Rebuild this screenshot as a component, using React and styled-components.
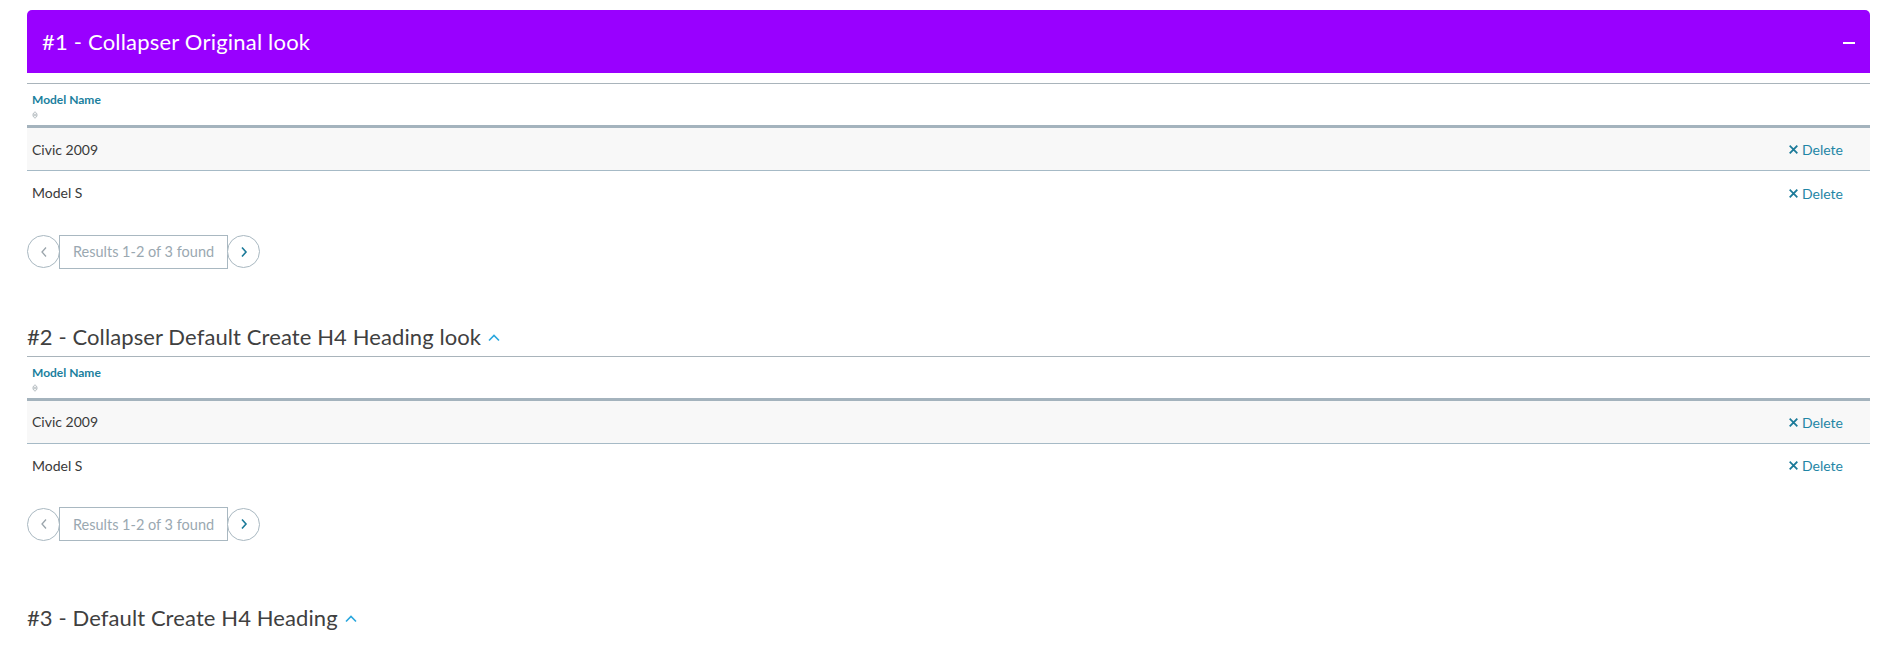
import React from "react"
import styled, { createGlobalStyle } from "styled-components"

const GlobalStyle = createGlobalStyle`
  body {
    margin: 0;
    background: #fff;
    font-family: Lato, "Open Sans", "Liberation Sans", sans-serif;
    color: #333;
  }
`

const rows = [
  { id: 1, name: "Civic 2009" },
  { id: 2, name: "Model S" },
]

const ModelTable = () => (
  <>
    <Table>
      <thead>
        <tr>
          <Th>
            <HeadLabel>Model Name</HeadLabel>
            <SortIcon viewBox="0 0 6 8">
              <path d="M0.7 3.3 L3 0.7 L5.3 3.3 Z M0.7 4.7 L3 7.3 L5.3 4.7 Z" fill="none" stroke="#a9b2b8" strokeWidth="0.8" />
            </SortIcon>
          </Th>
          <Th />
        </tr>
      </thead>
      <tbody>
        {rows.map((r, i) => (
          <Row key={r.id} striped={i % 2 === 0}>
            <Td>{r.name}</Td>
            <ActionTd>
              <DeleteButton>
                <svg width="9" height="9" viewBox="0 0 10 10">
                  <path d="M1.5 1.5 L8.5 8.5 M8.5 1.5 L1.5 8.5" stroke="#1b7a99" strokeWidth="2" strokeLinecap="square" />
                </svg>
                Delete
              </DeleteButton>
            </ActionTd>
          </Row>
        ))}
      </tbody>
    </Table>
    <Pager>
      <PagerCircle>
        <svg width="8" height="12" viewBox="0 0 8 12">
          <path d="M6 1.5 L2 6 L6 10.5" fill="none" stroke="#9aa4ab" strokeWidth="1.3" />
        </svg>
      </PagerCircle>
      <PagerInfo>Results 1-2 of 3 found</PagerInfo>
      <PagerCircle>
        <svg width="8" height="12" viewBox="0 0 8 12">
          <path d="M2 1.5 L6 6 L2 10.5" fill="none" stroke="#1b7a99" strokeWidth="1.6" />
        </svg>
      </PagerCircle>
    </Pager>
  </>
)

const Caret = () => (
  <CaretIcon viewBox="0 0 12 8">
    <path d="M1 6.5 L6 1.5 L11 6.5" fill="none" stroke="#2aa7de" strokeWidth="1.6" />
  </CaretIcon>
)

const App = () => {
  return (
    <Page>
      <GlobalStyle />
      <Section>
        <CollapserHeader>
          <CollapserTitle>#1 - Collapser Original look</CollapserTitle>
          <Minus />
        </CollapserHeader>
        <CollapserBody>
          <ModelTable />
        </CollapserBody>
      </Section>

      <Section gap="48px">
        <Heading>
          #2 - Collapser Default Create H4 Heading look <Caret />
        </Heading>
        <ModelTable />
      </Section>

      <Section gap="57px">
        <Heading>
          #3 - Default Create H4 Heading <Caret />
        </Heading>
      </Section>
    </Page>
  )
}

export default App

const Page = styled.div`
  padding: 10px 25px 40px 27px;
`

const Section = styled.section`
  margin-top: ${p => p.gap || "0"};
`

const CollapserHeader = styled.div`
  height: 63px;
  display: flex;
  align-items: center;
  justify-content: space-between;
  padding: 0 15px;
  background: #9900ff;
  border-radius: 5px 5px 0 0;
`

const CollapserTitle = styled.h3`
  margin: 0;
  color: #fff;
  font-size: 22px;
  font-weight: 400;
  letter-spacing: 0.2px;
`

const Minus = styled.span`
  display: block;
  width: 12px;
  height: 2px;
  background: #fff;
  margin-top: 2px;
`

const CollapserBody = styled.div`
  padding-top: 10px;
`

const Heading = styled.h4`
  margin: 0;
  height: 39px;
  display: flex;
  align-items: center;
  gap: 7px;
  font-size: 22px;
  font-weight: 400;
  letter-spacing: 0.1px;
  color: #404040;
`

const CaretIcon = styled.svg`
  width: 12px;
  height: 8px;
  margin-top: 3px;
`

const Table = styled.table`
  width: 100%;
  border-collapse: collapse;
  border-top: 1px solid #a9b4bb;
`

const Th = styled.th`
  text-align: left;
  vertical-align: top;
  padding: 8px 5px 6px;
  border-bottom: 3px solid #a4b3bd;
`

const HeadLabel = styled.div`
  font-size: 12px;
  font-weight: 700;
  color: #1b7f9e;
  line-height: 16px;
`

const SortIcon = styled.svg`
  display: block;
  width: 6px;
  height: 8px;
  margin-top: 3px;
`

const Row = styled.tr`
  height: 44px;
  background: ${p => (p.striped ? "#f8f8f8" : "#fff")};

  & + & {
    border-top: 1px solid #a6bac6;
  }
`

const Td = styled.td`
  padding: 0 5px;
  font-size: 14px;
  color: #3a3a3a;
`

const ActionTd = styled(Td)`
  text-align: right;
  padding-right: 27px;
`

const DeleteButton = styled.span`
  display: inline-flex;
  align-items: center;
  gap: 4px;
  font-size: 14px;
  color: #1f86a6;
  cursor: pointer;
`

const Pager = styled.div`
  display: flex;
  align-items: center;
  margin-top: 20px;
`

const PagerCircle = styled.button`
  width: 33px;
  height: 33px;
  border-radius: 50%;
  border: 1px solid #a9b8c1;
  background: #fff;
  display: flex;
  align-items: center;
  justify-content: center;
  padding: 0;
`

const PagerInfo = styled.div`
  width: 169px;
  height: 34px;
  box-sizing: border-box;
  border: 1px solid #a9b8c1;
  margin: 0 -1px;
  display: flex;
  align-items: center;
  justify-content: center;
  font-size: 14.5px;
  color: #9aa8b1;
`
